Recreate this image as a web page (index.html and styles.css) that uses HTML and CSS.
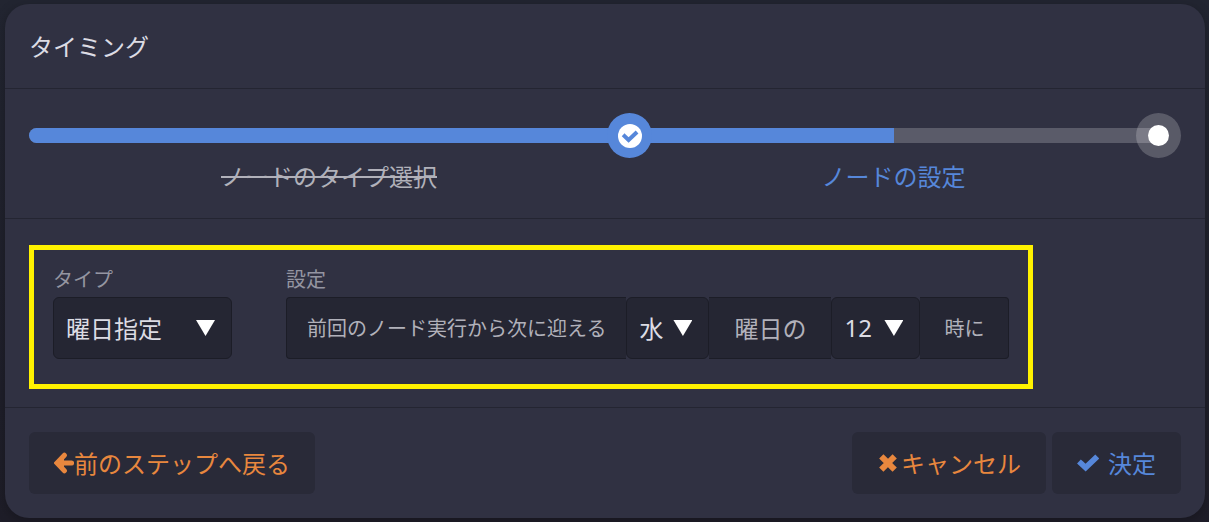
FILE: index.html
```html
<!DOCTYPE html>
<html lang="ja">
<head>
<meta charset="utf-8">
<meta name="viewport" content="width=device-width, initial-scale=1">
<title>タイミング</title>
<link rel="stylesheet" href="styles.css">
</head>
<body>
<main class="modal">
  <header class="modal-header">
    <h1 class="title">タイミング</h1>
  </header>

  <ol class="steps">
    <li class="step step-done">
      <div class="step-track">
        <div class="step-fill"></div>
        <span class="step-marker">
          <svg class="step-icon" viewBox="0 0 24 24" aria-hidden="true">
            <circle cx="12" cy="12" r="12" fill="#fff"/>
            <path d="M6.6 12.2 10.6 16 17.6 9.4" fill="none" stroke="#5687da" stroke-width="4" stroke-linecap="square"/>
          </svg>
        </span>
      </div>
      <span class="step-label">ノードのタイプ選択</span>
    </li>
    <li class="step step-current">
      <div class="step-track">
        <div class="step-fill"></div>
        <span class="step-marker"><span class="step-dot"></span></span>
      </div>
      <span class="step-label">ノードの設定</span>
    </li>
  </ol>

  <form class="form">
    <div class="settings">
      <div class="field">
        <label class="field-label" for="type">タイプ</label>
        <div class="select select-type">
          <select id="type"><option>曜日指定</option></select>
        </div>
      </div>
      <div class="field">
        <label class="field-label" for="weekday">設定</label>
        <div class="group">
          <span class="addon addon-first">前回のノード実行から次に迎える</span>
          <div class="select select-day">
            <select id="weekday"><option>水</option></select>
          </div>
          <span class="addon addon-large">曜日の</span>
          <div class="select select-hour">
            <select aria-label="時"><option>12</option></select>
          </div>
          <span class="addon addon-last">時に</span>
        </div>
      </div>
    </div>
  </form>

  <footer class="modal-footer">
    <button class="button button-orange button-back" type="button">
      <svg class="icon-arrow" viewBox="0 0 20 22" aria-hidden="true">
        <path d="M10.4 3.2 3 11l7.4 7.8M4 11h13.6" fill="none" stroke="currentColor" stroke-width="5" stroke-linecap="round"/>
        <path d="M3 11l7-7v14z" fill="currentColor"/>
      </svg>前のステップへ戻る</button>
    <button class="button button-orange button-cancel" type="button">
      <svg class="icon-cross" viewBox="0 0 18 18" aria-hidden="true">
        <path d="m4.4 4.4 9.2 9.2m0-9.2-9.2 9.2" fill="none" stroke="currentColor" stroke-width="6" stroke-linecap="square"/>
      </svg>キャンセル</button>
    <button class="button button-blue" type="button">
      <svg class="icon-check" viewBox="0 0 22 18" aria-hidden="true">
        <path d="m4 9.4 4.6 4.2L18.2 4.4" fill="none" stroke="currentColor" stroke-width="5.6" stroke-linecap="square"/>
      </svg>決定</button>
  </footer>
</main>
</body>
</html>
```
FILE: styles.css
```css
* {
  box-sizing: border-box;
}

body {
  margin: 0;
  padding: 4px 4px 4px 5px;
  min-height: 100vh;
  background: linear-gradient(#222531, #1e1d28);
  color: #dcdce4;
  font-family: "Noto Sans CJK JP", sans-serif;
  font-size: 24px;
  line-height: 36px;
}

.modal {
  background: #303142;
  border-radius: 24px;
  box-shadow: 0 3px 12px rgba(0, 0, 0, 0.25);
}

.modal-header,
.steps,
.form {
  border-bottom: 1px solid #242532;
}

.modal-header {
  padding: 24px;
}

.title {
  margin: 0;
  font-size: 24px;
  font-weight: 400;
}

.steps {
  display: flex;
  margin: 0;
  padding: 24px 47px 24px 24px;
  list-style: none;
}

.step {
  flex: 1 1 0;
  display: flex;
  flex-direction: column;
  text-align: center;
}

.step-done {
  flex-grow: 600;
}

.step-current {
  flex-grow: 529;
}

.step-track {
  position: relative;
  height: 15px;
  margin: 15px 0;
  background: #5a5b69;
}

.step-fill {
  height: 100%;
  background: #5687da;
}

.step-done .step-fill {
  width: 100%;
}

.step-done .step-track,
.step-done .step-fill {
  border-radius: 8px 0 0 8px;
}

.step-current .step-fill {
  width: 50%;
}

.step-marker {
  position: absolute;
  z-index: 1;
  top: -15px;
  right: -23px;
  display: flex;
  align-items: center;
  justify-content: center;
  width: 45px;
  height: 45px;
  border-radius: 50%;
}

.step-done .step-marker {
  background: #5687da;
}

.step-current .step-marker {
  background: rgba(255, 255, 255, 0.2);
}

.step-icon {
  width: 24px;
  height: 24px;
}

.step-dot {
  width: 21px;
  height: 21px;
  border-radius: 50%;
  background: #fff;
}

.step-done .step-label {
  align-self: center;
  color: #b1b1ba;
  text-decoration: line-through;
  text-decoration-thickness: 2px;
  text-decoration-skip-ink: none;
}

.step-current .step-label {
  color: #5687da;
}

.form {
  padding: 26px 24px 18px;
}

.settings {
  display: flex;
  gap: 54px;
  width: fit-content;
  padding: 15px 19px 25px;
  border: 5px solid #fff200;
}

.field {
  display: flex;
  flex-direction: column;
  gap: 4px;
}

.field-label {
  color: #9495a1;
  font-size: 20px;
  line-height: 28px;
}

.group {
  display: flex;
}

.select {
  position: relative;
}

.select::after {
  content: "";
  position: absolute;
  top: 23px;
  right: 17px;
  width: 19px;
  height: 16px;
  background: #fff;
  clip-path: polygon(0 0, 100% 0, 50% 100%);
  pointer-events: none;
}

.select select {
  appearance: none;
  display: block;
  width: 100%;
  height: 62px;
  padding: 0 12px;
  border: 1px solid #1c1d27;
  border-radius: 6px;
  background: #252633;
  color: #dcdce4;
  font: inherit;
}

.select-type {
  width: 179px;
}

.select-day {
  width: 83px;
}

.select-hour {
  width: 89px;
  font-family: "Noto Sans", "Noto Sans CJK JP", sans-serif;
}

.addon {
  display: flex;
  align-items: center;
  height: 62px;
  padding: 0 24px;
  border: solid #1c1d27;
  border-width: 1px 0;
  background: #252633;
  color: #b1b1ba;
  font-size: 20px;
  white-space: nowrap;
}

.addon-first {
  padding: 0 20px;
  border-left-width: 1px;
  border-radius: 4px 0 0 4px;
}

.addon-large {
  padding: 0 25px;
  font-size: 24px;
}

.addon-last {
  border-right-width: 1px;
  border-radius: 0 4px 4px 0;
}

.modal-footer {
  display: flex;
  gap: 6px;
  padding: 24px;
}

.button {
  display: flex;
  align-items: center;
  height: 62px;
  padding: 0 25px;
  border: 0;
  border-radius: 6px;
  background: #292a38;
  font: inherit;
  white-space: nowrap;
}

.button-orange {
  color: #e8873e;
}

.button-blue {
  color: #5687da;
}

.button-back {
  margin-right: auto;
}

.icon-arrow {
  width: 20px;
  height: 22px;
}

.icon-cross {
  width: 18px;
  height: 18px;
  margin: 0 4px 0 2px;
}

.icon-check {
  width: 22px;
  height: 18px;
  margin-right: 9px;
}
```
